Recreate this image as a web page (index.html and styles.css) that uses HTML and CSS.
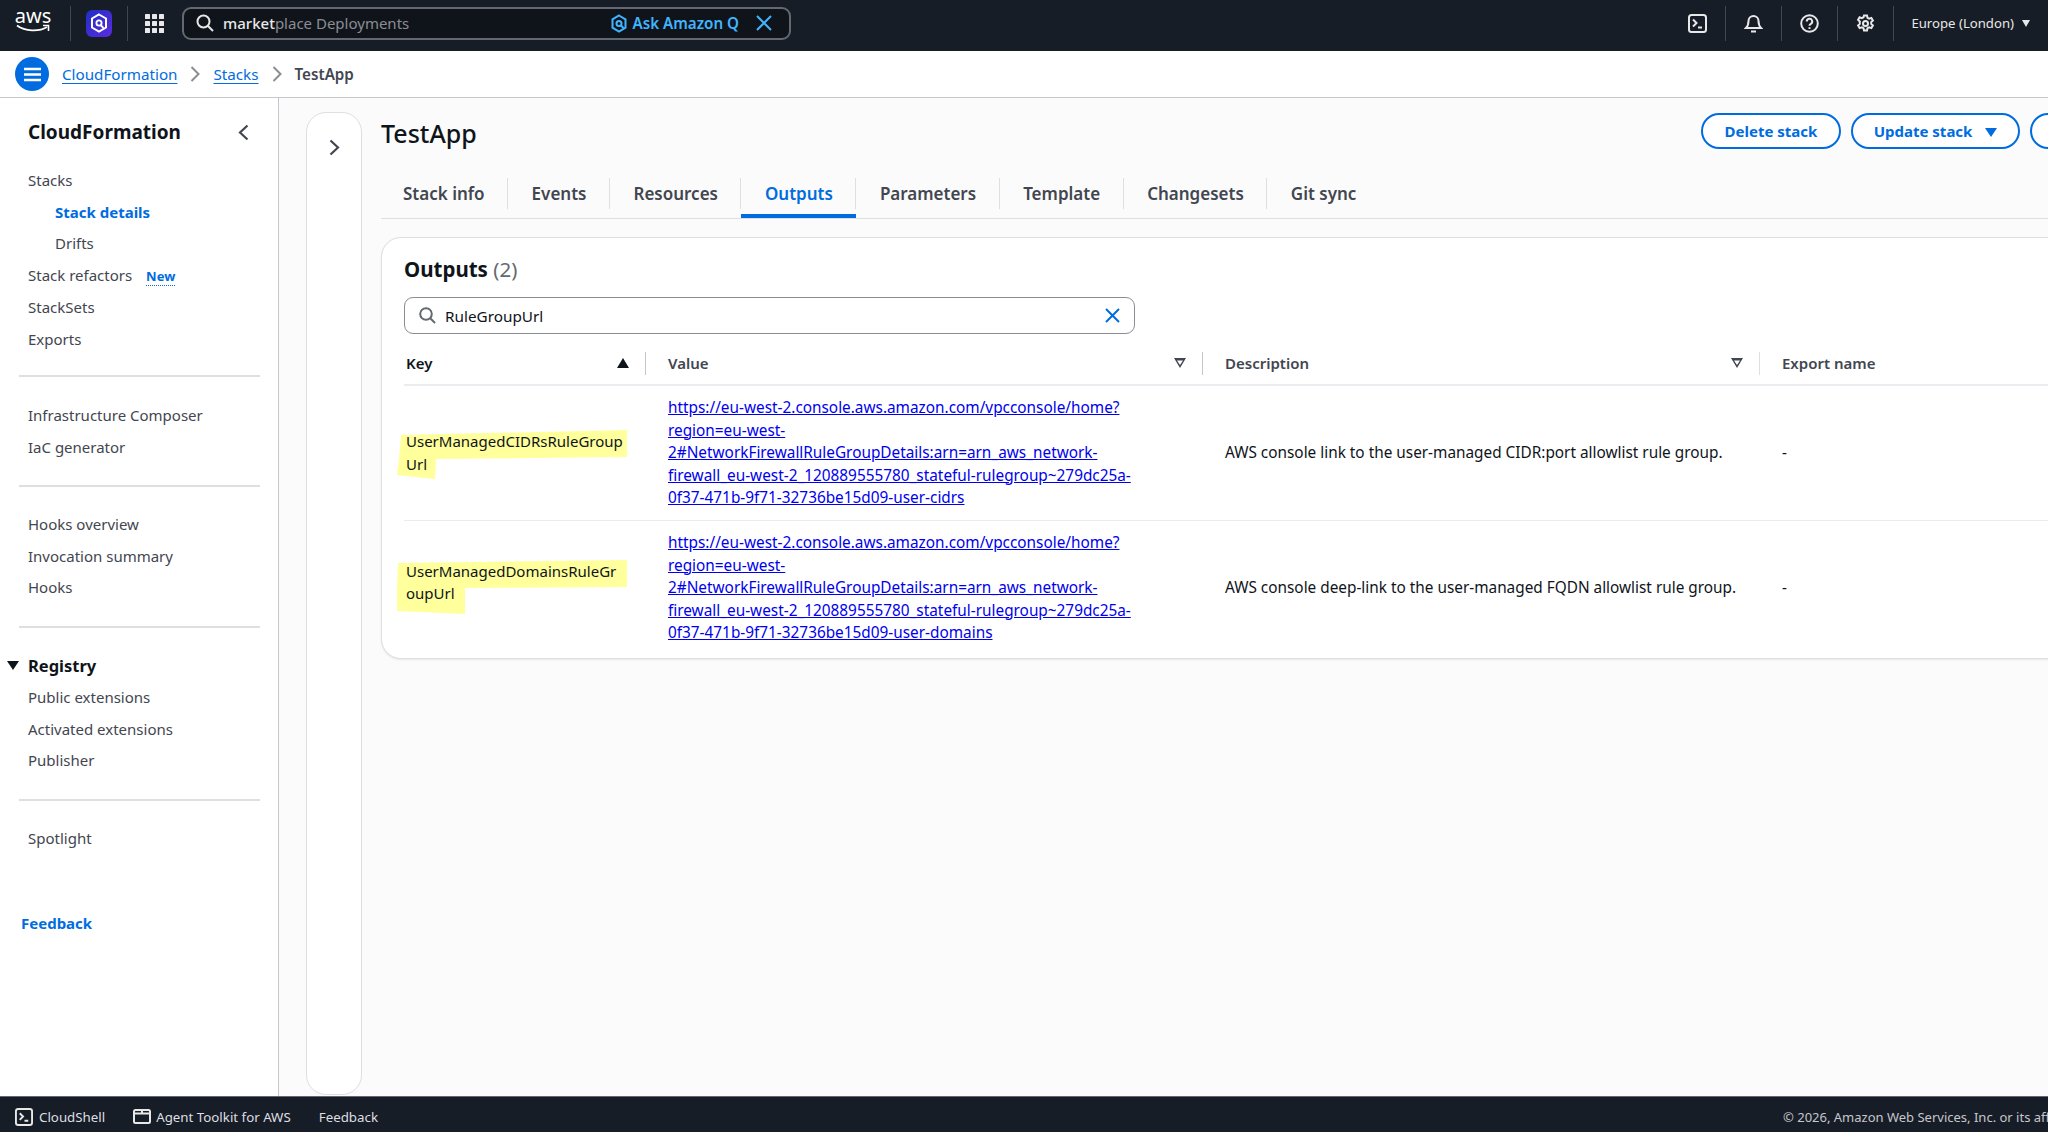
FILE: index.html
```html
<!DOCTYPE html>
<html lang="en">
<head>
    <meta charset="UTF-8">
    <title>TestApp | CloudFormation</title>
    <link rel="stylesheet" href="styles.css">
</head>
<body>
<div class="app">
    <!-- top navigation -->
    <header class="topbar">
        <div class="aws-logo">
            <span class="aws-word">aws</span>
            <svg class="aws-smile" width="34" height="9" viewBox="0 0 34 9"><path d="M1 1.5C9 7.5 23 8 31 3" fill="none" stroke="#fff" stroke-width="1.8"/><path d="M27 1.5h5.5V7" fill="none" stroke="#fff" stroke-width="1.6"/></svg>
        </div>
        <i class="top-sep first"></i>
        <div class="app-icon">
            <svg width="18" height="20" viewBox="0 0 18 20"><path d="M9 1.5l7 4v9l-7 4-7-4v-9z" fill="none" stroke="#fff" stroke-width="2"/><circle cx="9" cy="10" r="2.6" fill="none" stroke="#fff" stroke-width="1.8"/><path d="M10.5 12l3 3" stroke="#fff" stroke-width="1.8"/></svg>
        </div>
        <i class="top-sep second"></i>
        <svg class="grid-icon" width="19" height="19" viewBox="0 0 19 19" fill="#e8e8e8"><rect width="5" height="5" rx=".6"/><rect x="7" width="5" height="5" rx=".6"/><rect x="14" width="5" height="5" rx=".6"/><rect y="7" width="5" height="5" rx=".6"/><rect x="7" y="7" width="5" height="5" rx=".6"/><rect x="14" y="7" width="5" height="5" rx=".6"/><rect y="14" width="5" height="5" rx=".6"/><rect x="7" y="14" width="5" height="5" rx=".6"/><rect x="14" y="14" width="5" height="5" rx=".6"/></svg>
        <div class="top-search">
            <svg width="18" height="18" viewBox="0 0 18 18" fill="none" stroke="#e8e8e8" stroke-width="2"><circle cx="7.5" cy="7.5" r="6"/><path d="M12 12l5 5"/></svg>
            <span class="top-query"><b>market</b>place Deployments</span>
            <svg class="q-icon" width="16" height="19" viewBox="0 0 16 19" fill="none" stroke="#42b4ff" stroke-width="2"><path d="M8 1.5l6.5 3.8v8.4L8 17.5l-6.500-3.800V5.300z"/><circle cx="8" cy="9.500" r="2.500"/><path d="M9.500 11l3 3"/></svg>
            <span class="ask-q">Ask Amazon Q</span>
            <svg class="q-close" width="16" height="16" viewBox="0 0 16 16" stroke="#42b4ff" stroke-width="2"><path d="M1 1l14 14M15 1L1 15"/></svg>
        </div>
        <div class="top-right">
            <svg width="19" height="19" viewBox="0 0 19 19" fill="none" stroke="#e8e8e8" stroke-width="2"><rect x="1" y="1" width="17" height="17" rx="2.500"/><path d="M5 5.500l3.500 3.500L5 12.500M10 13.500h4"/></svg>
            <i class="top-sep"></i>
            <svg width="19" height="20" viewBox="0 0 19 20" fill="none" stroke="#e8e8e8" stroke-width="2"><path d="M2 15c2-2 2.500-3 2.500-7a5 5 0 0 1 10 0c0 4 .5 5 2.500 7z"/><path d="M7 18.500h5"/></svg>
            <i class="top-sep"></i>
            <svg width="19" height="19" viewBox="0 0 19 19" fill="none" stroke="#e8e8e8" stroke-width="2"><circle cx="9.500" cy="9.500" r="8.300"/><path d="M6.800 7.500a2.700 2.700 0 1 1 4 2.300c-.9.500-1.300 1-1.300 2"/><path d="M9.500 13.200v1.800"/></svg>
            <i class="top-sep"></i>
            <svg width="19" height="19" viewBox="0 0 19 19" fill="none" stroke="#e8e8e8" stroke-width="2"><path d="M8 1.500h3l.5 2.300 1.700.9 2.200-.8 1.500 2.600-1.700 1.600v1.800l1.700 1.600-1.500 2.600-2.200-.8-1.700.9-.5 2.300H8l-.5-2.300-1.700-.9-2.200.8-1.500-2.600 1.700-1.600V7.500L2.100 5.900l1.500-2.600 2.200.8 1.700-.9z"/><circle cx="9.500" cy="9.500" r="2.500"/></svg>
            <i class="top-sep"></i>
            <span class="region">Europe (London)</span>
            <i class="caret-white"></i>
        </div>
    </header>

    <!-- breadcrumbs -->
    <nav class="crumbs">
        <span class="menu-btn">
            <svg width="17" height="15" viewBox="0 0 17 15" stroke="#fff" stroke-width="2.400"><path d="M0 2h17M0 7.500h17M0 13h17"/></svg>
        </span>
        <a class="crumb-link" href="#">CloudFormation</a>
        <svg class="crumb-arrow" width="10" height="16" viewBox="0 0 10 16" fill="none" stroke="#8c8c94" stroke-width="2"><path d="M1.500 1l7 7-7 7"/></svg>
        <a class="crumb-link" href="#">Stacks</a>
        <svg class="crumb-arrow" width="10" height="16" viewBox="0 0 10 16" fill="none" stroke="#8c8c94" stroke-width="2"><path d="M1.500 1l7 7-7 7"/></svg>
        <span class="crumb-now">TestApp</span>
    </nav>

    <div class="main">
        <!-- left navigation -->
        <aside class="side">
            <div class="side-head">
                <h2>CloudFormation</h2>
                <svg width="11" height="17" viewBox="0 0 11 17" fill="none" stroke="#424650" stroke-width="2.200"><path d="M9.500 1.500l-7.500 7 7.500 7"/></svg>
            </div>
            <ul class="side-list">
                <li>Stacks</li>
                <li class="sub active">Stack details</li>
                <li class="sub">Drifts</li>
                <li>Stack refactors <span class="new-tag">New</span></li>
                <li>StackSets</li>
                <li>Exports</li>
            </ul>
            <hr class="side-line first">
            <ul class="side-list">
                <li>Infrastructure Composer</li>
                <li>IaC generator</li>
            </ul>
            <hr class="side-line">
            <ul class="side-list">
                <li>Hooks overview</li>
                <li>Invocation summary</li>
                <li>Hooks</li>
            </ul>
            <hr class="side-line">
            <div class="side-group"><i class="caret-dark"></i>Registry</div>
            <ul class="side-list tight">
                <li>Public extensions</li>
                <li>Activated extensions</li>
                <li>Publisher</li>
            </ul>
            <hr class="side-line">
            <ul class="side-list">
                <li>Spotlight</li>
            </ul>
            <a class="side-feedback" href="#">Feedback</a>
        </aside>

        <div class="content">
            <div class="tools-rail">
                <svg width="11" height="17" viewBox="0 0 11 17" fill="none" stroke="#424650" stroke-width="2.200"><path d="M1.500 1.500l7.500 7-7.500 7"/></svg>
            </div>
            <div class="page">
                <div class="page-head">
                    <h1>TestApp</h1>
                    <div class="actions">
                        <button class="btn del">Delete stack</button>
                        <button class="btn upd">Update stack <i class="caret-blue"></i></button>
                        <button class="btn more"></button>
                    </div>
                </div>

                <div class="tabs">
                    <a class="tab" href="#">Stack info</a>
                    <a class="tab" href="#">Events</a>
                    <a class="tab" href="#">Resources</a>
                    <a class="tab on" href="#">Outputs</a>
                    <a class="tab" href="#">Parameters</a>
                    <a class="tab" href="#">Template</a>
                    <a class="tab" href="#">Changesets</a>
                    <a class="tab" href="#">Git sync</a>
                </div>

                <section class="card">
                    <h2 class="card-title">Outputs <span>(2)</span></h2>
                    <div class="filter">
                        <svg width="17" height="17" viewBox="0 0 17 17" fill="none" stroke="#656871" stroke-width="2"><circle cx="7" cy="7" r="5.800"/><path d="M11 11l5 5"/></svg>
                        <span class="filter-text">RuleGroupUrl</span>
                        <svg class="filter-x" width="15" height="15" viewBox="0 0 15 15" stroke="#006ce0" stroke-width="2"><path d="M1 1l13 13M14 1L1 14"/></svg>
                    </div>
                    <table class="outputs">
                        <colgroup>
                            <col class="c-key"><col class="c-val"><col class="c-desc"><col class="c-exp">
                        </colgroup>
                        <thead>
                            <tr>
                                <th class="th-key"><div class="th-in">Key <i class="sort-up"></i></div></th>
                                <th><div class="th-in">Value <i class="sort-down"></i></div></th>
                                <th><div class="th-in">Description <i class="sort-down"></i></div></th>
                                <th><div class="th-in">Export name</div></th>
                            </tr>
                        </thead>
                        <tbody>
                            <tr>
                                <td class="td-key">
                                    <!-- marker scribble over the key -->
                                    <svg class="marker m-one" width="240" height="60" viewBox="0 0 240 60"><path d="M4 5L230 0v27L39 29l-1 20L0 45l2-16z" fill="#ffff9c"/></svg>
                                    <span class="key-text">UserManagedCIDRsRuleGroupUrl</span>
                                </td>
                                <td class="td-url"><a class="url" href="#">https://eu-west-2.console.aws.amazon.com/vpcconsole/home?region=eu-west-2#NetworkFirewallRuleGroupDetails:arn=arn_aws_network-firewall_eu-west-2_120889555780_stateful-rulegroup~279dc25a-0f37-471b-9f71-32736be15d09-user-cidrs</a></td>
                                <td>AWS console link to the user-managed CIDR:port allowlist rule group.</td>
                                <td>-</td>
                            </tr>
                            <tr>
                                <td class="td-key">
                                    <svg class="marker m-two" width="240" height="60" viewBox="0 0 240 60"><path d="M1 3L230 0v27L68 28v26L0 51V26z" fill="#ffff9c"/></svg>
                                    <span class="key-text">UserManagedDomainsRuleGroupUrl</span>
                                </td>
                                <td class="td-url"><a class="url" href="#">https://eu-west-2.console.aws.amazon.com/vpcconsole/home?region=eu-west-2#NetworkFirewallRuleGroupDetails:arn=arn_aws_network-firewall_eu-west-2_120889555780_stateful-rulegroup~279dc25a-0f37-471b-9f71-32736be15d09-user-domains</a></td>
                                <td>AWS console deep-link to the user-managed FQDN allowlist rule group.</td>
                                <td>-</td>
                            </tr>
                        </tbody>
                    </table>
                </section>
            </div>
        </div>
    </div>

    <!-- console footer -->
    <footer class="foot">
        <svg width="18" height="18" viewBox="0 0 19 19" fill="none" stroke="#e8e8e8" stroke-width="2"><rect x="1" y="1" width="17" height="17" rx="2.500"/><path d="M5 5.500l3.500 3.500L5 12.500M10 13.500h4"/></svg>
        <span class="foot-shell">CloudShell</span>
        <svg class="foot-kit-icon" width="18" height="15" viewBox="0 0 18 15" fill="none" stroke="#e8e8e8" stroke-width="2"><rect x="1" y="1" width="16" height="13" rx="1.500"/><path d="M1 4.500h16M8 3h2" /></svg>
        <span class="foot-kit">Agent Toolkit for AWS</span>
        <span class="foot-feedback">Feedback</span>
        <span class="copyright">© 2026, Amazon Web Services, Inc. or its affiliates.</span>
    </footer>
</div>
</body>
</html>
```

FILE: styles.css
```css
* {
    margin: 0;
    padding: 0;
    box-sizing: border-box;
}

html, body {
    height: 100%;
    overflow: hidden;
}

body {
    font-family: "Noto Sans", "Open Sans", sans-serif;
    font-size: 14px;
    color: #0f141a;
}

ul, li {
    list-style: none;
}

a {
    color: inherit;
}

.app {
    display: flex;
    flex-direction: column;
    width: 2048px;
    height: 1132px;
    overflow: hidden;
}

/* top navigation */
.topbar {
    display: flex;
    align-items: center;
    flex: none;
    height: 51px;
    padding: 0 0 5px 16px;
    background: #161d26;
    color: #e8e8e8;
}

.aws-logo {
    display: flex;
    flex-direction: column;
    align-items: center;
    width: 34px;
    color: #fff;
}

.aws-word {
    font-size: 20px;
    line-height: 17px;
    margin-top: -6px;
}

.top-sep {
    display: block;
    width: 1px;
    height: 35px;
    background: #424650;
}

.top-sep.first {
    margin-left: 20px;
}

.top-sep.second {
    margin-left: 15px;
}

.app-icon {
    display: flex;
    align-items: center;
    justify-content: center;
    width: 26px;
    height: 27px;
    margin-left: 15px;
    border-radius: 6px;
    background: linear-gradient(135deg, #1f2fc4, #5b2be0);
}

.grid-icon {
    margin-left: 17px;
}

.top-search {
    display: flex;
    align-items: center;
    width: 609px;
    height: 33px;
    margin-left: 18px;
    padding: 0 17px 0 12px;
    border: 2px solid #656871;
    border-radius: 9px;
    background: #0f141a;
}

.top-query {
    margin-left: 9px;
    font-size: 15px;
    color: #8c8c94;
}

.top-query b {
    font-weight: 500;
    color: #e8e8e8;
}

.q-icon {
    margin-left: auto;
}

.ask-q {
    margin-left: 5px;
    font-size: 15.200px;
    font-weight: 600;
    color: #42b4ff;
}

.q-close {
    margin-left: 17px;
}

.top-right {
    display: flex;
    align-items: center;
    margin-left: auto;
    padding-right: 18px;
    gap: 18px;
}

.region {
    margin: 0 -10px 0 -1px;
    font-size: 13.160px;
}

.caret-white {
    width: 0;
    height: 0;
    border-left: 4.500px solid transparent;
    border-right: 4.500px solid transparent;
    border-top: 7px solid #e8e8e8;
}

/* breadcrumbs */
.crumbs {
    display: flex;
    align-items: center;
    flex: none;
    height: 47px;
    padding-left: 15px;
    background: #fff;
    border-bottom: 1px solid #c6c6cd;
    font-size: 15.200px;
}

.menu-btn {
    display: flex;
    align-items: center;
    justify-content: center;
    width: 34px;
    height: 34px;
    margin-right: 13px;
    border-radius: 50%;
    background: #006ce0;
}

.crumb-link {
    color: #006ce0;
    text-underline-offset: 3px;
}

.crumb-arrow {
    margin: 0 13px;
}

.crumb-now {
    font-weight: 600;
    color: #424650;
}

.main {
    display: flex;
    flex: 1;
    min-height: 0;
}

/* left navigation */
.side {
    flex: none;
    width: 279px;
    padding-top: 19px;
    background: #fff;
    border-right: 1px solid #c6c6cd;
    font-size: 15px;
    color: #424650;
}

.side-head {
    display: flex;
    align-items: center;
    justify-content: space-between;
    height: 30px;
    margin-bottom: 18px;
    padding: 0 29px 0 28px;
}

.side-head h2 {
    font-size: 19px;
    font-weight: 700;
    color: #0f141a;
}

.side-list {
    padding: 0 0 0 28px;
}

.side-list li {
    line-height: 31.500px;
}

.side-list .sub {
    padding-left: 27px;
}

.side-list .active {
    font-weight: 700;
    color: #006ce0;
}

.side-list.tight {
    margin-top: 1px;
}

.new-tag {
    margin-left: 10px;
    font-size: 13px;
    font-weight: 700;
    color: #006ce0;
    border-bottom: 1px dotted #006ce0;
}

.side-line {
    width: 241px;
    height: 2px;
    margin: 22px 0 22px 19px;
    border: 0;
    background: #dedee3;
}

.side-line.first {
    margin: 20px 0 23px 19px;
}

.side-group {
    position: relative;
    padding-left: 28px;
    font-size: 16.500px;
    font-weight: 700;
    line-height: 31.700px;
    color: #0f141a;
}

.caret-dark {
    position: absolute;
    left: 7px;
    top: 11px;
    width: 0;
    height: 0;
    border-left: 6px solid transparent;
    border-right: 6px solid transparent;
    border-top: 9px solid #0f141a;
}

.side-feedback {
    display: block;
    margin: 59px 0 0 21px;
    font-weight: 700;
    color: #006ce0;
    text-decoration: none;
}

/* page area */
.content {
    display: flex;
    flex: 1;
    min-width: 0;
    padding: 14px 0 1px 27px;
    background: #fbfbfb;
    overflow: hidden;
}

.tools-rail {
    flex: none;
    width: 56px;
    padding: 26px 0 0 22px;
    background: #fff;
    border: 1px solid #dedee3;
    border-radius: 20px;
}

.page {
    flex: none;
    width: 1788px;
    margin-left: 19px;
}

.page-head {
    display: flex;
    justify-content: space-between;
    height: 66px;
}

.page-head h1 {
    font-size: 25px;
    font-weight: 500;
    line-height: 42px;
}

.actions {
    display: flex;
    gap: 10px;
    padding-top: 1px;
}

.btn {
    height: 36px;
    border: 2px solid #006ce0;
    border-radius: 18px;
    background: #fff;
    font-family: inherit;
    font-size: 15px;
    font-weight: 700;
    color: #006ce0;
}

.del {
    width: 140px;
}

.upd {
    width: 169px;
}

.more {
    width: 139px;
}

.caret-blue {
    display: inline-block;
    width: 0;
    height: 0;
    margin-left: 9px;
    border-left: 6px solid transparent;
    border-right: 6px solid transparent;
    border-top: 9px solid #006ce0;
}

.tabs {
    display: flex;
    height: 41px;
    border-bottom: 1px solid #dedee3;
}

.tab {
    position: relative;
    height: 40px;
    padding: 0 23.500px;
    font-size: 17px;
    font-weight: 600;
    line-height: 31px;
    color: #424650;
    text-decoration: none;
}

.tab:first-child {
    padding-left: 22px;
}

.tab:not(:last-child)::after {
    content: "";
    position: absolute;
    right: 0;
    top: 0;
    width: 1px;
    height: 31px;
    background: #dedee3;
}

.tab.on {
    color: #006ce0;
    border-bottom: 4px solid #006ce0;
}

.card {
    width: 1788px;
    height: 422px;
    margin-top: 18px;
    background: #fff;
    border: 1px solid #dedee3;
    border-radius: 20px;
    box-shadow: 0 1px 2px rgba(0, 7, 22, .08);
}

.card-title {
    padding: 15px 0 0 22px;
    font-size: 20.500px;
    font-weight: 700;
    line-height: 32px;
}

.card-title span {
    font-weight: 400;
    color: #656871;
}

.filter {
    display: flex;
    align-items: center;
    width: 731px;
    height: 37px;
    margin: 12px 0 0 22px;
    padding: 0 14px 0 14px;
    border: 1px solid #8c8c94;
    border-radius: 9px;
    font-size: 15.300px;
}

.filter-text {
    margin-left: 9px;
}

.filter-x {
    margin-left: auto;
}

/* outputs table */
.outputs {
    width: 1700px;
    margin: 10px 0 0 22px;
    border-collapse: collapse;
    table-layout: fixed;
    font-size: 15.350px;
}

.c-key {
    width: 241px;
}

.c-val, .c-desc {
    width: 557px;
}

.outputs th {
    height: 41px;
    padding: 0 0 2px;
    text-align: left;
    font-size: 15px;
    font-weight: 600;
    color: #424650;
    border-bottom: 2px solid #ebebf0;
}

.outputs .th-key {
    color: #0f141a;
}

.th-in {
    display: flex;
    align-items: center;
    justify-content: space-between;
    height: 23px;
    padding: 0 16px 0 22px;
    border-left: 1px solid #c6c6cd;
}

.th-key .th-in {
    padding-left: 2px;
    border-left: 0;
}

th:last-child .th-in {
    padding-left: 22px;
    border-left: 1px solid #dedee3;
}

.sort-up {
    width: 0;
    height: 0;
    border-left: 6px solid transparent;
    border-right: 6px solid transparent;
    border-bottom: 10px solid #0f141a;
}

.sort-down {
    width: 12px;
    height: 10px;
    background: #424650;
    clip-path: polygon(0 0, 100% 0, 50% 100%, 0 0, 25% 25%, 50% 70%, 75% 25%, 25% 25%);
}

.outputs td {
    padding: 10px 10px 11px 23px;
    line-height: 22.600px;
    border-bottom: 1px solid #ebebf0;
}

.outputs tr:last-child td {
    border-bottom: 0;
    padding-bottom: 14px;
}

.outputs .td-url {
    padding-right: 45px;
}

.outputs .td-key {
    position: relative;
    padding: 0 21px 0 2px;
    font-size: 15px;
    word-break: break-all;
}

.key-text {
    position: relative;
}

.marker {
    position: absolute;
    left: -7px;
}

.m-one {
    top: 44px;
}

.m-two {
    top: 39px;
}

.url {
    color: #0000ee;
}

/* console footer */
.foot {
    display: flex;
    align-items: center;
    flex: none;
    height: 36px;
    padding: 4px 0 0 15px;
    background: #161d26;
    border-top: 1px solid #656871;
    font-size: 13.300px;
    color: #dedee3;
    white-space: nowrap;
}

.foot-shell {
    margin-left: 6px;
}

.foot-kit-icon {
    margin-left: 28px;
}

.foot-kit {
    margin-left: 5px;
}

.foot-feedback {
    margin-left: 28px;
}

.copyright {
    flex: none;
    width: 265px;
    margin-left: auto;
    font-size: 13px;
    color: #c6c6cd;
}
```
